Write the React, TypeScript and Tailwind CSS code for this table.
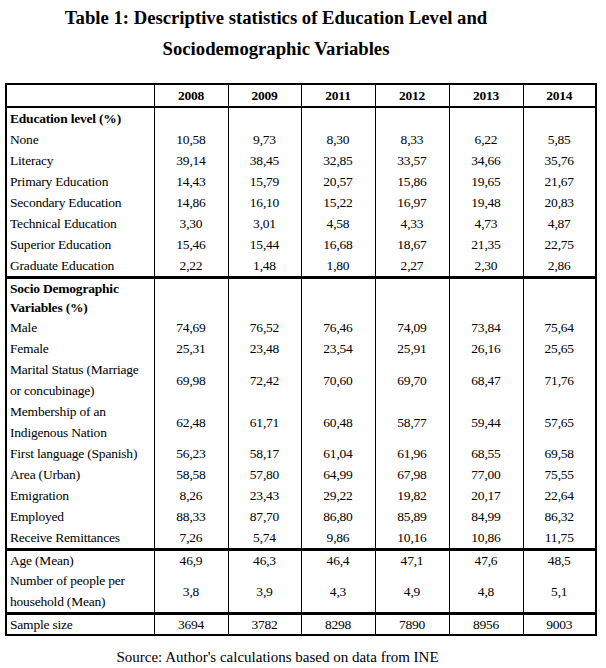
import React from "react";

type Row = {
  label: React.ReactNode;
  values?: string[];
  bold?: boolean;
};

const years = ["2008", "2009", "2011", "2012", "2013", "2014"];

const sec1: Row[] = [
  { label: "Education level (%)", bold: true },
  { label: "None", values: ["10,58", "9,73", "8,30", "8,33", "6,22", "5,85"] },
  { label: "Literacy", values: ["39,14", "38,45", "32,85", "33,57", "34,66", "35,76"] },
  { label: "Primary Education", values: ["14,43", "15,79", "20,57", "15,86", "19,65", "21,67"] },
  { label: "Secondary Education", values: ["14,86", "16,10", "15,22", "16,97", "19,48", "20,83"] },
  { label: "Technical Education", values: ["3,30", "3,01", "4,58", "4,33", "4,73", "4,87"] },
  { label: "Superior Education", values: ["15,46", "15,44", "16,68", "18,67", "21,35", "22,75"] },
  { label: "Graduate Education", values: ["2,22", "1,48", "1,80", "2,27", "2,30", "2,86"] },
];

const sec2: Row[] = [
  { label: <>Socio Demographic<br />Variables (%)</>, bold: true },
  { label: "Male", values: ["74,69", "76,52", "76,46", "74,09", "73,84", "75,64"] },
  { label: "Female", values: ["25,31", "23,48", "23,54", "25,91", "26,16", "25,65"] },
  { label: <>Marital Status (Marriage<br />or concubinage)</>, values: ["69,98", "72,42", "70,60", "69,70", "68,47", "71,76"] },
  { label: <>Membership of an<br />Indigenous Nation</>, values: ["62,48", "61,71", "60,48", "58,77", "59,44", "57,65"] },
  { label: "First language (Spanish)", values: ["56,23", "58,17", "61,04", "61,96", "68,55", "69,58"] },
  { label: "Area (Urban)", values: ["58,58", "57,80", "64,99", "67,98", "77,00", "75,55"] },
  { label: "Emigration", values: ["8,26", "23,43", "29,22", "19,82", "20,17", "22,64"] },
  { label: "Employed", values: ["88,33", "87,70", "86,80", "85,89", "84,99", "86,32"] },
  { label: "Receive Remittances", values: ["7,26", "5,74", "9,86", "10,16", "10,86", "11,75"] },
];

const sec3: Row[] = [
  { label: "Age (Mean)", values: ["46,9", "46,3", "46,4", "47,1", "47,6", "48,5"] },
  { label: <>Number of people per<br />household (Mean)</>, values: ["3,8", "3,9", "4,3", "4,9", "4,8", "5,1"] },
];

const sec4: Row[] = [
  { label: "Sample size", values: ["3694", "3782", "8298", "7890", "8956", "9003"] },
];

function Section({ rows, first }: { rows: Row[]; first: boolean }) {
  return (
    <>
      {rows.map((r, i) => {
        const top = !first && i === 0;
        return (
          <tr key={i} className={top ? "border-t-[3px] border-black leading-[19px]" : ""}>
            <td className={`pl-[3px] whitespace-nowrap align-middle ${r.bold ? "font-bold" : ""}`}>
              {r.label}
            </td>
            {years.map((_, j) => (
              <td key={j} className="border-l border-black text-center align-middle">
                {r.values ? r.values[j] : ""}
              </td>
            ))}
          </tr>
        );
      })}
    </>
  );
}

export default function App() {
  return (
    <div className="w-[606px] h-[668px] bg-white text-black [font-family:'Liberation_Serif',serif]">
      <div className="w-[552px] pt-[2px] text-center font-bold text-[18.7px] leading-[31px] [font-family:'Liberation_Serif',serif]">
        Table 1: Descriptive statistics of Education Level and
        <br />
        Sociodemographic Variables
      </div>
      <table className="ml-[5px] mt-[19px] border-collapse table-fixed border-2 border-black text-[13.5px] leading-[21px] tracking-[-0.2px] text-black [font-family:'Liberation_Serif',serif]">
        <colgroup>
          <col className="w-[148px]" />
          <col className="w-[74px]" />
          <col className="w-[73px]" />
          <col className="w-[74px]" />
          <col className="w-[74px]" />
          <col className="w-[74px]" />
          <col className="w-[73px]" />
        </colgroup>
        <tbody>
          <tr className="border-b-2 border-black">
            <td className="h-[20px]"></td>
            {years.map((y) => (
              <td key={y} className="border-l border-black text-center font-bold">
                {y}
              </td>
            ))}
          </tr>
          <Section rows={sec1} first={true} />
          <Section rows={sec2} first={false} />
          <Section rows={sec3} first={false} />
          <Section rows={sec4} first={false} />
        </tbody>
      </table>
      <div className="w-[555px] mt-[11px] text-center text-[15px] leading-[20px] [font-family:'Liberation_Serif',serif]">
        Source: Author's calculations based on data from INE
      </div>
    </div>
  );
}
